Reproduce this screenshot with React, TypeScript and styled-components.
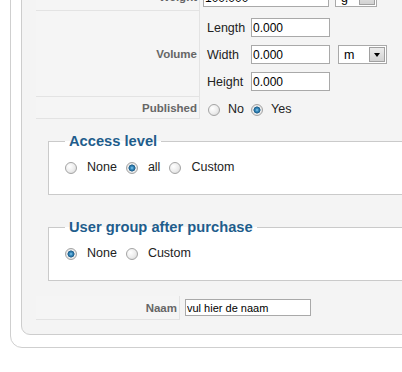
'use client';
import styled, { createGlobalStyle } from 'styled-components';

interface RadioOption {
  id: string;
  label: string;
  checked: boolean;
}

interface RadioGroupProps {
  name: string;
  options: RadioOption[];
  labelGap: number;
  itemGap: number;
}

const publishedOptions: RadioOption[] = [
  { id: 'pub-no', label: 'No', checked: false },
  { id: 'pub-yes', label: 'Yes', checked: true }
];

const accessOptions: RadioOption[] = [
  { id: 'acc-none', label: 'None', checked: false },
  { id: 'acc-all', label: 'all', checked: true },
  { id: 'acc-custom', label: 'Custom', checked: false }
];

const groupOptions: RadioOption[] = [
  { id: 'grp-none', label: 'None', checked: true },
  { id: 'grp-custom', label: 'Custom', checked: false }
];

const dimensions = ['Length', 'Width', 'Height'];

function RadioGroup({ name, options, labelGap, itemGap }: RadioGroupProps) {
  return (
    <RadioRow $itemGap={itemGap}>
      {options.map((option) => (
        <RadioLabel key={option.id} $labelGap={labelGap}>
          <RadioInput type="radio" name={name} defaultChecked={option.checked} />
          {option.label}
        </RadioLabel>
      ))}
    </RadioRow>
  );
}

function FakeSelect({ value, width }: { value: string; width: number }) {
  return (
    <SelectBox $width={width}>
      <span>{value}</span>
      <SelectButton>
        <Arrow />
      </SelectButton>
    </SelectBox>
  );
}

export default function App() {
  return (
    <>
      <GlobalStyle />
      <ElementBox>
        <Panel>
          <AdminTable $keyWidth={164}>
            <KeyCell>Weight</KeyCell>
            <ValueCell $pad="4px 0 3px 3px">
              <InlineRow>
                <TextInput $width={126} defaultValue="100.000" />
                <FakeSelect value="g" width={42} />
              </InlineRow>
            </ValueCell>

            <KeyCell>Volume</KeyCell>
            <ValueCell $pad="7px 0 5px 0">
              <DimGrid>
                {dimensions.map((dim) => (
                  <DimRow key={dim}>
                    <DimLabel>{dim}</DimLabel>
                    <TextInput $width={79} defaultValue="0.000" />
                    <UnitCell>{dim === 'Width' && <FakeSelect value="m" width={49} />}</UnitCell>
                  </DimRow>
                ))}
              </DimGrid>
            </ValueCell>

            <KeyCell>Published</KeyCell>
            <ValueCell $pad="5px 0 1px 8px">
              <RadioGroup name="published" options={publishedOptions} labelGap={8} itemGap={7} />
            </ValueCell>
          </AdminTable>

          <Fieldset $top={14}>
            <Legend>Access level</Legend>
            <RadioGroup name="access" options={accessOptions} labelGap={10} itemGap={9} />
          </Fieldset>

          <Fieldset $top={24}>
            <Legend>User group after purchase</Legend>
            <RadioGroup name="usergroup" options={groupOptions} labelGap={10} itemGap={9} />
          </Fieldset>

          <AdminTable $keyWidth={144} $top={15}>
            <KeyCell>Naam</KeyCell>
            <ValueCell $pad="3px 0 3px 5px">
              <TextInput $width={126} $height={17} $size={11} defaultValue="vul hier de naam" />
            </ValueCell>
          </AdminTable>
        </Panel>
      </ElementBox>
    </>
  );
}

const GlobalStyle = createGlobalStyle`
  html, body {
    margin: 0;
    padding: 0;
    background: #ffffff;
    overflow: hidden;
  }

  body {
    font-family: 'Liberation Sans', Arial, sans-serif;
    color: #222;
  }
`;

const ElementBox = styled.div`
  margin: -28px 0 0 10px;
  width: 480px;
  padding: 0 10px 12px 10px;

  border: 1px solid #cfcfcf;
  border-radius: 0 0 12px 12px;
  background: #ffffff;
`;

const Panel = styled.div`
  padding: 10px 0 14px 14px;

  border: 1px solid #cdcdcd;
  border-radius: 0 0 9px 9px;
  background: #f4f4f4;
`;

const AdminTable = styled.div<{ $keyWidth: number; $top?: number }>`
  display: grid;
  grid-template-columns: ${(p) => p.$keyWidth}px 1fr;
  margin-top: ${(p) => p.$top ?? 0}px;
`;

const KeyCell = styled.div`
  display: flex;
  align-items: center;
  justify-content: flex-end;
  padding-right: 2px;

  background: #f5f5f5;
  border-right: 1px solid #e3e3e3;
  border-bottom: 1px solid #e3e3e3;

  color: #666;
  font-size: 11.5px;
  font-weight: 700;
`;

const ValueCell = styled.div<{ $pad: string }>`
  padding: ${(p) => p.$pad};
  border-bottom: 1px solid transparent;
  display: flex;
  align-items: center;
`;

const InlineRow = styled.div`
  display: flex;
  align-items: center;
  gap: 6px;
`;

const DimGrid = styled.div`
  display: flex;
  flex-direction: column;
  gap: 8px;
`;

const DimRow = styled.div`
  display: grid;
  grid-template-columns: 51px 79px auto;
  align-items: center;
`;

const DimLabel = styled.span`
  padding-left: 7px;
  font-size: 12.5px;
  color: #222;
`;

const UnitCell = styled.div`
  padding-left: 8px;
  display: flex;
  align-items: center;
`;

const TextInput = styled.input<{ $width: number; $height?: number; $size?: number }>`
  box-sizing: border-box;
  width: ${(p) => p.$width}px;
  height: ${(p) => p.$height ?? 19}px;
  margin: 0;
  padding: 0 1px;

  border: 1px solid #a9a9a9;
  background: #ffffff;
  outline: none;

  font-family: 'Liberation Sans', Arial, sans-serif;
  font-size: ${(p) => p.$size ?? 12}px;
  color: #000;
`;

const SelectBox = styled.div<{ $width: number }>`
  box-sizing: border-box;
  width: ${(p) => p.$width}px;
  height: 19px;
  padding-left: 5px;

  display: flex;
  align-items: center;
  justify-content: space-between;

  border: 1px solid #a9a9a9;
  background: #ffffff;

  font-size: 12.5px;
  color: #000;
`;

const SelectButton = styled.span`
  box-sizing: border-box;
  width: 16px;
  height: 15px;
  margin-right: 1px;

  display: flex;
  align-items: center;
  justify-content: center;

  border: 1px solid #a0a0a0;
  background: linear-gradient(#ececec, #d2d2d2);
`;

const Arrow = styled.span`
  width: 0;
  height: 0;
  border-left: 3.5px solid transparent;
  border-right: 3.5px solid transparent;
  border-top: 4px solid #000;
`;

const RadioRow = styled.div<{ $itemGap: number }>`
  display: flex;
  align-items: center;
  gap: ${(p) => p.$itemGap}px;
  line-height: 15px;
`;

const RadioLabel = styled.label<{ $labelGap: number }>`
  display: inline-flex;
  align-items: center;
  gap: ${(p) => p.$labelGap}px;

  font-size: 12.5px;
  color: #222;
`;

const RadioInput = styled.input`
  appearance: none;
  box-sizing: border-box;
  width: 12px;
  height: 12px;
  margin: 0;

  border: 1px solid #a4a4a4;
  border-radius: 50%;
  background: radial-gradient(circle at 35% 35%, #ffffff 0%, #ececec 55%, #d0d0d0 100%);

  &:checked {
    background: radial-gradient(
      circle at 50% 50%,
      #8fd0f0 0,
      #3a8cbf 1.5px,
      #1b5b87 3.2px,
      #eeeeee 3.8px,
      #d4d4d4 100%
    );
  }
`;

const Fieldset = styled.fieldset<{ $top: number }>`
  margin: ${(p) => p.$top}px 0 0 12px;
  padding: 10px 10px 19px 16px;

  border: 1px solid #cacaca;
  background: #ffffff;
`;

const Legend = styled.legend`
  padding: 0 4px;

  color: #1f5d8c;
  font-size: 14.7px;
  font-weight: 700;
  line-height: 17px;
`;
